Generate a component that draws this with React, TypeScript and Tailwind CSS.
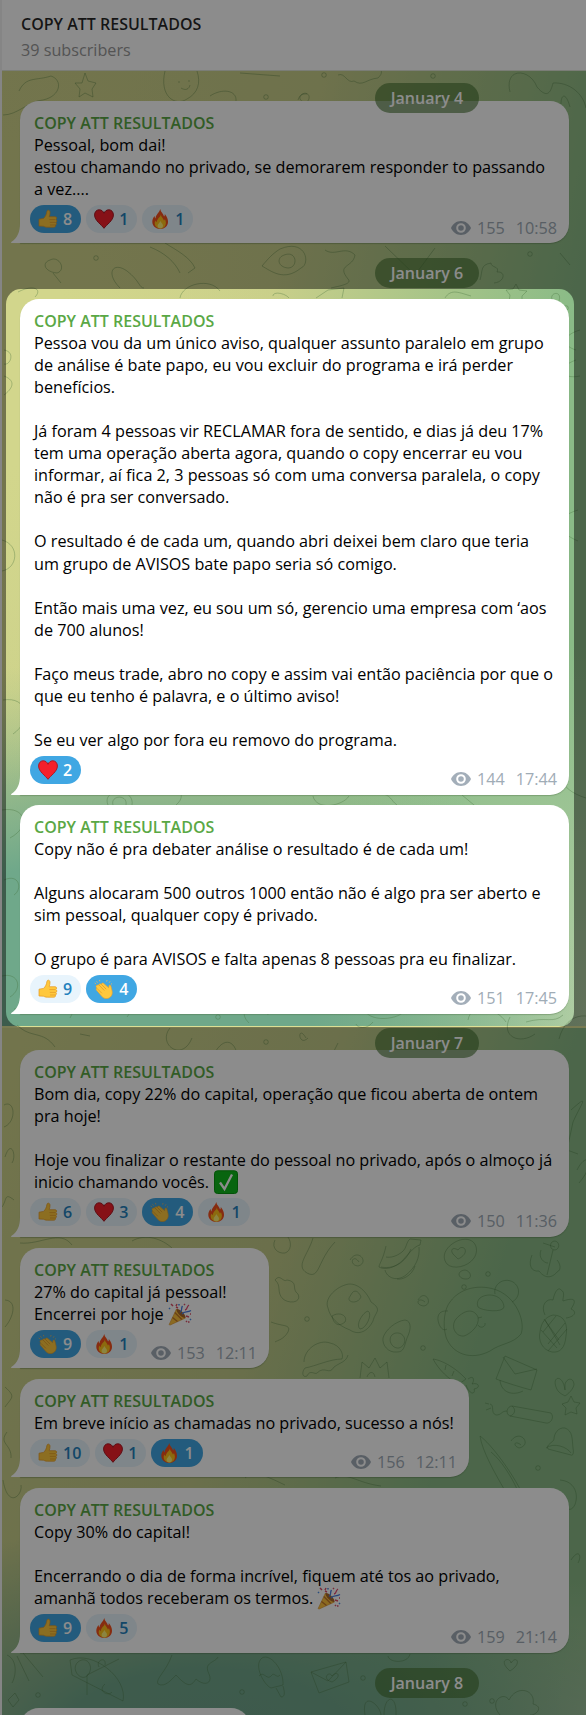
import type { ReactNode } from "react";

type Kind = "thumb" | "heart" | "fire" | "clap";

type Reaction = { kind: Kind; count: number; active?: boolean };

type Message = {
  lines: ReactNode[];
  reactions: Reaction[];
  views: number;
  time: string;
  width: string;
  height: string;
};

function Thumb() {
  return (
    <svg viewBox="0 0 20 20" className="h-5 w-5 shrink-0">
      <path
        d="M1 10.2 5.6 9.4C7.4 7.6 8.5 5.6 8.9 2.6 9.2.5 11.8.7 12 3c.1 1.8-.3 3.2-.8 4.7h5.9c1.7 0 2.1 2.2.7 2.8 1.5.6 1.3 2.6 0 2.9 1.1.7.8 2.4-.5 2.6.6 1.2-.1 2.2-1.5 2.2H9.4c-2 0-3-.6-4-1L1 17z"
        fill="#ffc83d"
        stroke="#e79a21"
        strokeWidth=".7"
      />
      <path d="M11.4 10.6h6M11.8 13.4h5.7M12 16h5" stroke="#e39a25" strokeWidth=".7" fill="none" />
    </svg>
  );
}

function Heart() {
  return (
    <svg viewBox="0 0 20 20" className="h-5 w-5 shrink-0">
      <path
        d="M10 19.3C7.500 15.800.6 11.500.6 6 .6 3 2.500.8 5.200.8 7.400.8 9.200 2.200 10 4.300c.8-2.100 2.600-3.500 4.800-3.500 2.700 0 4.600 2.200 4.600 5.200 0 5.500-6.900 9.800-9.400 13.300z"
        fill="#f5202b"
        stroke="#a81b26"
        strokeWidth="1"
      />
    </svg>
  );
}

function Fire() {
  return (
    <svg viewBox="0 0 20 20" className="h-5 w-5 shrink-0">
      <path
        d="M10.2 0c.6 3.400 3 4.200 3.900 7.500.6-.8.8-1.600.7-2.600 2.200 2.500 3.300 5.300 3.200 8.100C17.900 17 14.700 20 10.300 20 5.700 20 2.500 17 2.300 13c-.1-2.500.9-4.500 2.300-6.100 0 1 .3 1.900.9 2.500C5.700 5.500 9.500 3.500 10.200 0z"
        fill="#f4511e"
      />
      <path
        d="M10.900 5.500c0 2.500 2.500 3.500 3 6.100.6-.4.900-1 1-1.700 2.600 5.200-.2 9.600-4.600 9.600-4.300 0-6.800-3.600-5-7.900.3.900.8 1.300 1.500 1.600 0-3.600 3.600-4.700 4.100-7.700z"
        fill="#ffc21a"
      />
      <path d="M10.400 12c.3 1.600 2.600 2.600 2.600 4.600 0 1.800-1.100 2.900-2.700 2.900s-2.700-1-2.700-2.700c0-1.900 2.200-2.900 2.800-4.800z" fill="#fff176" />
    </svg>
  );
}

function Clap() {
  return (
    <svg viewBox="0 0 20 20" className="h-5 w-5 shrink-0">
      <path
        d="M2.800 6.200c-.9.300-1.100 1.300-.5 2.100l.4.800c-.8.600-.7 1.500 0 2.300l5.400 6.300c2.200 2.300 5.700 2.600 8.200.4 1.900-1.900 2.300-3.900 1.700-6.500l-1.200-4.900c-.3-1.200-1.800-1-1.900.2l-.2 1.900-4.900-4.300c-1-.9-2.200-.5-2.200.4l-.8.200c-1-.6-1.800-.2-1.900.7z"
        fill="#ffc83d"
        stroke="#e8a02a"
        strokeWidth=".6"
      />
      <path d="m5 6 5.300 5.500M2.900 9.300l5 5M7.200 5.200l5 5" stroke="#dd9526" strokeWidth=".7" fill="none" />
      <path d="m2.500 2.300 1 1.300M.7 4l1.200.8M5.500.9l.3 1.500M13 1l-.3 1.600M16 2.300l-.8 1.400M18 4.500l-1 .8" stroke="#e9b55e" strokeWidth=".8" />
    </svg>
  );
}

function Check() {
  return (
    <svg viewBox="0 0 24 24" className="-my-[4px] ml-[5px] inline-block h-6 w-6 align-[-2px]">
      <rect x=".5" y=".8" width="23" height="22.7" rx="3" fill="#10b91c" stroke="#07960f" />
      <path d="m6 12.500 4.500 6.500L18 4.500" fill="none" stroke="#fff" strokeWidth="2.3" />
    </svg>
  );
}

function Party() {
  return (
    <svg viewBox="0 0 24 24" className="-my-[4px] ml-[4px] inline-block h-6 w-6 align-[-2px]">
      <path d="M8.500 7 1.300 22.200c-.2.600.3 1 .9.800L17.500 16z" fill="#fdc23c" stroke="#d8922c" strokeWidth=".6" />
      <path d="m6.800 10.500 7 7M4.500 15.500l5 4" stroke="#c2762d" strokeWidth="1.3" />
      <ellipse cx="13" cy="11.5" rx="2" ry="6" transform="rotate(-45 13 11.5)" fill="#a9692d" />
      <path d="M12 10.500c3-2 .5-4 2.500-6.500M14 12c2.500-3.500 5-1 9-3.500" stroke="#4a7ce0" strokeWidth="1.3" fill="none" />
      <path d="M17 8c3-.5 1-3 4-5" stroke="#e34a72" strokeWidth="1.3" fill="none" />
      <path d="m3 2 2 2M8 4l1-2M10 6 8 5M18 14l3 1M20 20h1.500M16 2l1 1M22 12h1M18 19l1 1" stroke="#db4e67" strokeWidth="1.5" />
      <path d="m1 6 1 1M22 17l1 1M11 2v1.500" stroke="#4b8de5" strokeWidth="1.5" />
    </svg>
  );
}

function Eye() {
  return (
    <svg viewBox="0 0 20 14" className="h-[14px] w-5">
      <path
        fillRule="evenodd"
        d="M10 0C5.500 0 1.800 2.800 0 7c1.800 4.200 5.500 7 10 7s8.200-2.800 10-7c-1.800-4.200-5.500-7-10-7zm0 2.200a4.800 4.800 0 1 1 0 9.600 4.800 4.800 0 0 1 0-9.600zm0 2a2.800 2.800 0 1 0 0 5.600 2.800 2.800 0 0 0 0-5.600z"
        fill="#a3aeb9"
      />
    </svg>
  );
}

const icons = { thumb: Thumb, heart: Heart, fire: Fire, clap: Clap };

function Pill({ kind, count, active }: Reaction) {
  const Icon = icons[kind];
  return (
    <div
      className={`flex h-7 items-center gap-[5px] rounded-full pl-[8px] pr-[9px] text-[16px] font-semibold ${
        active ? "bg-[#40a7e3] text-white" : "bg-[#e8f4fc] text-[#2481bd]"
      }`}
    >
      <Icon />
      {count}
    </div>
  );
}

function Bubble({ lines, reactions, views, time, width, height }: Message) {
  return (
    <div className={`relative ml-[20px] flex flex-col rounded-[19px] rounded-bl-none bg-white pl-[14px] pr-[12px] pt-[11px] shadow-[0_1px_1px_rgba(70,100,60,0.35)] ${width} ${height}`}>
      <svg viewBox="0 0 10 20" className="absolute -left-[9px] bottom-0 h-5 w-[10px]">
        <path d="M10 0v20H1c-1 0-1.200-.8-.4-1.300C6.500 15 9 9 9 0z" fill="#fff" />
      </svg>
      <div className="whitespace-nowrap text-[16.22px] leading-[22.06px] text-black">
        <div className="text-[16px] font-semibold leading-[22.06px] text-[#5aa845]">COPY ATT RESULTADOS</div>
        {lines.map((line, i) => (
          <div key={i} className="h-[22.06px]">
            {line}
          </div>
        ))}
      </div>
      <div className="-ml-[4px] mt-[5px] flex gap-[5px]">
        {reactions.map((r) => (
          <Pill key={r.kind} {...r} />
        ))}
        <div className="ml-auto mt-[12px] flex h-[22px] items-center text-[16.2px] text-[#a0acb6]">
          <Eye />
          <span className="ml-[6px]">{views}</span>
          <span className="ml-[11px]">{time}</span>
        </div>
      </div>
    </div>
  );
}

function DatePill({ day, className }: { day: string; className: string }) {
  return (
    <div className={`relative z-10 ml-[375px] flex h-[30px] w-[104px] items-center justify-center rounded-full bg-[#42702f]/60 text-[16px] font-semibold text-white ${className}`}>
      {day}
    </div>
  );
}

const doodles = [
  // banana, thought bubble, anchor
  "M386 1246c-3 14-7 18-7 21 5 3 15 2 24-7 7-8 12-14 17-15l1-5-11-1c-4 3-3 9-8 13-5 4-11 6-16 5m-5 10c9 2 23-1 30-18m-26 21c2 8 12 12 21 5 10-8 14-18 13-28m-22 32c5 1 15-3 18-13",
  "M460 1240c15-4 20 9 14 18s-21 12-27 6c-8-10 3-21 13-24zm-5 16c-6-5-3-10 3-6 3-5 9-2 7 3-2 4-7 6-7 6zm10 14c6 1 8 9 1 9-8 0-10-8-1-9z",
  "M555 1241c5 1 5 8 0 9-6 0-6-9 0-9zm-2 9-6 25m-15-20c-4 10-1 17 7 16 7 9 14 6 18 1 5-2 3-9 0-12m-16-10c-3 8 3 13 7 13m-5-20 12 4",
  // donut pot, avocado
  "M345 1285c10-4 21 5 26 17 12 8 4 10 2 19-5 10-14 15-23 9-13-5-20-13-22-22-4-9 7-20 17-23zm7 8c4-5 8 1 9 4-3 7-13 6-12 1zm16 18c5 3-2 18-8 18-5-4 3-17 8-18zm-36 5c8-5 16 0 13 6-6 5-11 3-13-6z",
  "M405 1320c7 1 6 10 2 18-3 9-3 14-10 14-9 1-15-7-14-14 2-8 13-17 22-18zm-9 13c10-1 12 12 3 15-9 1-13-13-3-15z",
  // panda
  "M450 1302c12-17 36-18 51-10 18 10 24 32 20 42-8 10-20 9-31 17-19 10-38 3-44-14-4-14-1-29 4-35zm45-8c-2-10 9-17 18-12 8 5 7 16-1 20m-64 9c-9-1-12 5-9 13 2 5 5 7 8 5m9-10c7-8 17-12 22-2 2 9-8 17-14 19-8 1-14-9-8-17zm24-21c8-6 23-3 24 9-1 6-22 4-26 0-1-3-1-6 2-9zm-2 20 4-1m-4 8c2 4 8 2 7-2",
  // pineapple
  "M553 1315c12 0 15 10 13 21-1 12-6 17-14 16-10-2-14-12-12-20 1-9 5-15 13-17zm-8 0c-5-10 2-17 8-15 2-10 6-13 8-10 5 2 1 10 2 11 12-4 14-1 8 8 7 3 3 8-5 9m-21 2 15 25m-19-15 16 18m-13-29 15 21m8-11-19 22m8-35-13 16m22-9-17 21",
  // burger, crown
  "M304 1362c0-13 15-23 26-19 10 2 14 11 12 16-12 0-26 7-37 9-4 5-2 10 2 8 3-7 8-1 10-3 8-8 12 3 17-6 7-5 12-5 14-12M360 1378l2-16 7 6 6-10 5 10 7-6 2 16m-22-1c2-6 7-6 8 0",
  // carrot, envelope
  "M433 1359c8 1 22 8 33 20l-7 5c-10-4-20-14-26-25zm13 6-1 5m9 1-2 5m16 3c7-5 6 3 4 5 7-2 9 4 2 5 2 5-4 7-8-4M505 1356l32 14-6 20c-11-3-24-7-35-11zm-2 1 12 17 22-5m-37 11c1 13 13 16 23 11",
  "M565 1390c-2-16-13-14-9-3 2 6 6 7 9 9 6-4 9-9 9-12-1-7-7-6-9 0zM571 1396l3 6 6 1-4 5 1 6-6-2-6 3 1-7-4-4 6-2z",
  "M512 1406 551 1413c4 5-1 11-5 10l-36-7c-5-2-3-10 2-10zm0 0c5 4 2 9-2 10m-3-5c-6 0-5 4-11 4-6-2-1-10-6-11m-5-1 4 1m-3 6 5-2",
  "M565 1428c8 3 7 11 8 20 1 5 0 8-2 7l-23-6c-3-4 6-7 6-10 0-5 4-12 11-11zm-19 20c8-6 21-1 25 5M480 1436c11 8 30 34 40 53m-40-53c2 15 16 39 24 53m-13-37c10 8 20 24 26 37",
  // bottom row
  "M70 1660c23-10 58 18 53 41L72 1675zm18 15c-7 8-18-6-10-13s17 4 10 13zm-1 0v20m0-20 32-16m-14 25c-8 7 3 13 7 8m-13-25c-4-7 8-11 6-2M172 1655c-6 17-17 24-14 29 7 4 14-5 18-9 11 12 15 12 20 4 9 8 17 4 13-5-6-12 6-11 9-17",
  "M262 1658c8-5 22 11 21 27l-12 3c-7-3-18-23-9-30zm-3 18c5-6 8 6 13-1 2-3 5 4 8 0m-4 13 5 9c4 0 4-4 2-11M311 1672l35-10 3 20-30 11zm0 0 17 9 18-19m-14 20c-11-3-3-12 0-6 5-6 11 0 0 6M388 1656c1 7 20 8 22-2M510 1671c-13-11 0-15 1-8 5-8 12 0-1 8zM500 1715c-12-14 4-24 9-15 8-16 27-10 24 4 12 3 2 12-3 11M365 1715c-4-25 15-11 16 0m3 0c0-20 13-22 12 0",
  // top segment
  "M85 73l-3 10-7 0 5 6-1 8 6-4 8 4-1-8 4-6-8-2zM165 71c-6 25 10 36 22 28 11-6 14-16 10-28m-18 10v2m10-3v2m-8 6c5 3 8 1 9-3M338 75c7-3 9 9 16 6 9 6 12-2 24-3 5-5 5-8-3-12M240 73l40 3M210 96c12-8 27-6 26 5M3 115c15 0 25-14 40-15 18-4 20-20 8-24-15 5-25 0-32 15M298 100c4-12 16-6 9 2-9 1-10-9 0-8M510 92c-6-25 20-24 27-5 11 13 14 4 16-4 16-1 30 10 33 25m-25-4c0-10 5-12 9 3",
  "M120 288c-15-15-7-27 7-17 13 10 12 17 17 17M50 260c9-5 17 10 7 13-12-1-16-10-7-13zm3 13 8 10M150 247c15 6 25 15 30 26m8 0 7-5c-5-11-19-18-30-25M280 249c26-11 31 15 21 19-17 14-30 3-39-2 6-7 10-12 18-17zm2 7c15-8 17 12 6 12-10-1-11-9-6-12zM325 250c10 7 20-5 30 5-2 13-19 9-7 24 5 5-9 7-17 9M385 246l30 29 20-27M480 280c3-10 0-15 11-17 0 5 9 3 6 9 9-1 8 10-3 11M560 253l10 12",
  "M18 292c15-8 25-3 17 5M180 298c2-14 30-21 40-7M273 296c0-5 12-3 16 2M316 298l12-8 16-2-2 10M445 298c6-10 15-5 26-2M516 284l3 6 8 1-5 5 0 6-8-2-5 2 1-7-4-5 7-1zM553 301c-6-8 10-12 6 0M4 350c12 2 6 16 0 14m0 12c13 5 8 13 0 19M2 540c18 5 16 28 0 31M3 700c25-4 29 21 10 34M580 330c-18 5-18 16-4 20m0 10c-20 7-15 20 4 16M578 510c-24 7-22 22 0 31M540 610l12-8 4 8-12 8zM2 810c23-4 30 16 8 28M4 880c15-7 19 9 10 15M569 760c-13 11-12 29 17 38",
  "M108 805c-7-17 27-18 24 0m-19 0c-3-10 15-11 13 0m50 0c7-6 5-10 5-13m132 4c3 15 30 10 36 0m30-3c13 2 11 7 18 12m65-10 24 20M2 976c17-4 21 13 8 21m4 12c17 0 22-8 29-13l9 15M70 1018l4-8m53 7c4-5 5-10 8-8m114 14c-17-17 17-24 19-8m95-8c4 17 38 13 43 2m62 11c3-18 29-12 38 2m20 0c20-6 27 2 37-7",
  "M17 1025c14 14 26 5 38 22m25-13 10 2M170 1028c-13 16 12 35 22 10m20 20c10-22 23-20 26 0m68-20c-9-15-8 10 2 0m30 5-7 14m25-33c1 4 11 6 17-2m137-5c-10 20 10 28 25 17m24 5c7-29 38-30 44-7M4 1105c11-6 13 17 0 22m1 30c6-19 12-1 7 6m2 37c-10-8-7 0-12 7M571 1110c20-18 10-6 2 12l-6 28 11 4M577 1170c10-20 20-8 2 13M20 1243c21 2 40-14 52 2m60-4c14-8 30-2 40 7M275 1240c-4 8 3 14 10 13 6-2 7-10 3-16M5 1300c13 1 8 18 0 27m0 60c11 10 7 10 0 20m2 25c-9 12 5 12 4 26",
  "M313 1238c-5 17-18 28-6 35 13 7 10-12 28-31M350 1260c8-13 20 3 8 6-10-1-5-13 1-4M418 1300c7-12 16 4 6 6-10-1-6-10 1-4M511 1441c9-13 22 4 8 7-7-3-4-8 2-3M275 1280c5-7 8 3 12 0 12 2 4 9 11 14 4 9-9 10-15 5-7-7-1-13-8-19zM271 1322c13 5 20 2 17 10-5 8-10 8-13 10M3 1480c5 30 20 15 18 5M560 1480c24 2 17 33 8 29M571 1560c8-12 11-4 7 3M7 1655c11 5 9 21 5 28m5-27 12 25m-6-28 20 24M8 1700l7-7 4 7-6 7zM245 1478c9-9 25 0 40 7M335 1478c13-6 22 5 46 8",
];

const dots = [[324, 75], [433, 76], [266, 97], [96, 258], [530, 254], [566, 308], [218, 1017], [266, 1042], [307, 1319], [423, 1348], [464, 1287], [488, 1274], [538, 1468], [242, 1692], [363, 1678], [465, 1704], [492, 1701], [38, 1695]];

const first: Message[] = [
  {
    lines: ["Pessoa vou da um único aviso, qualquer assunto paralelo em grupo", "de análise é bate papo, eu vou excluir do programa e irá perder", "benefícios.", "", "Já foram 4 pessoas vir RECLAMAR fora de sentido, e dias já deu 17%", "tem uma operação aberta agora, quando o copy encerrar eu vou", "informar, aí fica 2, 3 pessoas só com uma conversa paralela, o copy", "não é pra ser conversado.", "", "O resultado é de cada um, quando abri deixei bem claro que teria", "um grupo de AVISOS bate papo seria só comigo.", "", "Então mais uma vez, eu sou um só, gerencio uma empresa com ‘aos", "de 700 alunos!", "", "Faço meus trade, abro no copy e assim vai então paciência por que o", "que eu tenho é palavra, e o último aviso!", "", "Se eu ver algo por fora eu removo do programa."],
    reactions: [{ kind: "heart", count: 2, active: true }],
    views: 144,
    time: "17:44",
    width: "w-[549px]",
    height: "h-[496px]",
  },
  {
    lines: ["Copy não é pra debater análise o resultado é de cada um!", "", "Alguns alocaram 500 outros 1000 então não é algo pra ser aberto e", "sim pessoal, qualquer copy é privado.", "", "O grupo é para AVISOS e falta apenas 8 pessoas pra eu finalizar."],
    reactions: [{ kind: "thumb", count: 9 }, { kind: "clap", count: 4, active: true }],
    views: 151,
    time: "17:45",
    width: "w-[549px]",
    height: "h-[209px]",
  },
];

const second: Message[] = [
  {
    lines: ["Bom dia, copy 22% do capital, operação que ficou aberta de ontem", "pra hoje!", "", "Hoje vou finalizar o restante do pessoal no privado, após o almoço já", <>inicio chamando vocês.<Check /></>],
    reactions: [{ kind: "thumb", count: 6 }, { kind: "heart", count: 3 }, { kind: "clap", count: 4, active: true }, { kind: "fire", count: 1 }],
    views: 150,
    time: "11:36",
    width: "w-[549px]",
    height: "h-[187px]",
  },
  {
    lines: ["27% do capital já pessoal!", <>Encerrei por hoje<Party /></>],
    reactions: [{ kind: "clap", count: 9, active: true }, { kind: "fire", count: 1 }],
    views: 153,
    time: "12:11",
    width: "w-[249px]",
    height: "h-[120px]",
  },
  {
    lines: ["Em breve início as chamadas no privado, sucesso a nós!"],
    reactions: [{ kind: "thumb", count: 10 }, { kind: "heart", count: 1 }, { kind: "fire", count: 1, active: true }],
    views: 156,
    time: "12:11",
    width: "w-[449px]",
    height: "h-[98px]",
  },
  {
    lines: ["Copy 30% do capital!", "", "Encerrando o dia de forma incrível, fiquem até tos ao privado,", <>amanhã todos receberam os termos.<Party /></>],
    reactions: [{ kind: "thumb", count: 9, active: true }, { kind: "fire", count: 5 }],
    views: 159,
    time: "21:14",
    width: "w-[549px]",
    height: "h-[165px]",
  },
];

export default function App() {
  return (
    <div className="relative flex h-[1715px] w-[586px] flex-col overflow-hidden bg-white font-['Open_Sans','Noto_Sans',sans-serif]">
      {/* Wallpaper */}
      <div className="absolute inset-x-0 bottom-0 top-[71px] flex flex-col">
        <div className="h-[955px] bg-[radial-gradient(ellipse_50%_45%_at_0%_30%,#d2d68c_0%,#d2d68c_25%,transparent_100%),radial-gradient(ellipse_85%_38%_at_15%_100%,#6fa88a_0%,#6fa88a_45%,transparent_100%),radial-gradient(ellipse_50%_40%_at_100%_100%,#b3cfa5_0%,transparent_100%),linear-gradient(103deg,#d0d48b_0%,#c9cf8a_40%,#8abb87_78%)]" />
        <div className="flex-1 border-t-2 border-[#dce095] bg-[radial-gradient(ellipse_75%_34%_at_35%_105%,#6fa38c_0%,#72a78b_35%,transparent_100%),radial-gradient(ellipse_30%_20%_at_100%_100%,#a5c69d_0%,transparent_100%),linear-gradient(108deg,#d0d48b_0%,#c3cb89_42%,#8abb87_72%)]" />
      </div>
      <svg viewBox="0 0 586 1715" className="absolute inset-0 h-full w-full" fill="none" stroke="#44703a" strokeOpacity=".34" strokeWidth="1">
        {doodles.map((d, i) => (
          <path key={i} d={d} />
        ))}
        {dots.map(([cx, cy], i) => (
          <circle key={i} cx={cx} cy={cy} r="2.3" />
        ))}
      </svg>

      <header className="relative flex h-[71px] shrink-0 flex-col border-b border-[#dfe3d8] bg-white pl-[21px] pt-[12px]">
        <div className="text-[16px] font-semibold leading-6 text-black/85">COPY ATT RESULTADOS</div>
        <div className="mt-[2px] text-[16.2px] leading-6 text-[#999]">39 subscribers</div>
      </header>

      <main className="relative flex flex-col">
        <DatePill day="January 4" className="mt-[12px]" />
        <div className="-mt-[12px]">
          <Bubble
            lines={["Pessoal, bom dai!", "estou chamando no privado, se demorarem responder to passando", "a vez...."]}
            reactions={[{ kind: "thumb", count: 8, active: true }, { kind: "heart", count: 1 }, { kind: "fire", count: 1 }]}
            views={155}
            time="10:58"
            width="w-[549px]"
            height="h-[142px]"
          />
        </div>
        <DatePill day="January 6" className="mt-[15px]" />
        <div className="mt-[11px] flex flex-col gap-[10px]">
          {first.map((m) => (
            <Bubble key={m.time} {...m} />
          ))}
        </div>
        <DatePill day="January 7" className="mt-[14px]" />
        <div className="-mt-[8px] flex flex-col gap-[11px]">
          {second.map((m) => (
            <Bubble key={m.views} {...m} />
          ))}
        </div>
        <DatePill day="January 8" className="mt-[15px]" />
        <div className="ml-[20px] mt-[10px] h-10 w-[230px] rounded-[19px] bg-white" />
      </main>

      {/* Window edge and the dimmed area around the spotlight */}
      <div className="absolute inset-y-0 left-0 w-[2px] bg-[#f2f2f2]" />
      <div className="absolute left-[6px] top-[289px] z-20 h-[738px] w-[568px] rounded-[15px] shadow-[0_0_0_2000px_rgba(0,0,0,0.45)]" />
    </div>
  );
}
